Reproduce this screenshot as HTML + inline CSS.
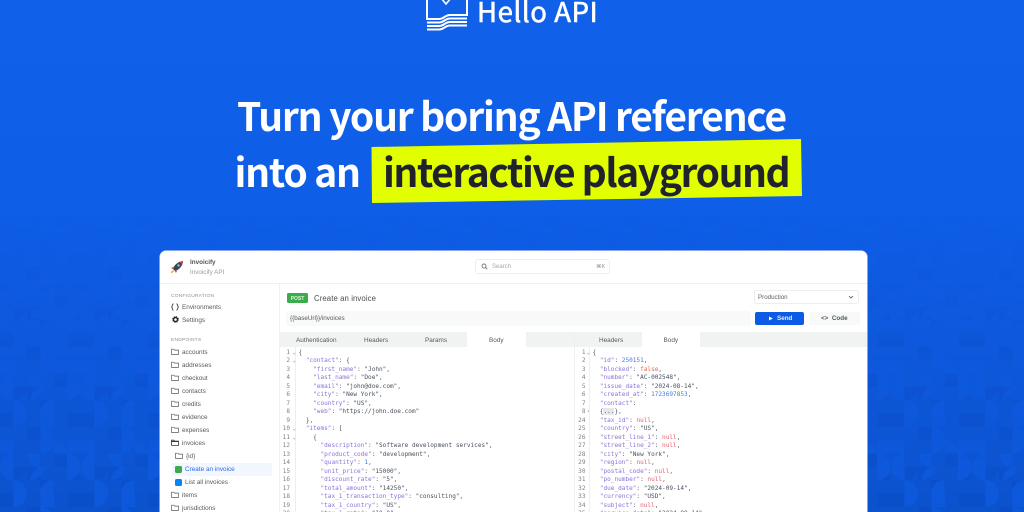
<!DOCTYPE html>
<html><head><meta charset="utf-8">
<style>
*{box-sizing:border-box;margin:0;padding:0}
html,body{width:1024px;height:512px;overflow:hidden}
body{position:relative;background:linear-gradient(180deg,#1060ea 0,#0f5ee8 200px,#0b52cd 512px);font-family:"Liberation Sans",sans-serif}
.a{position:absolute;white-space:nowrap}
.h{font-family:"Noto Sans CJK SC","Liberation Sans",sans-serif;font-weight:700;font-size:39px;letter-spacing:-1.22px;color:#fff;line-height:56px}
#card{position:absolute;left:160px;top:251px;width:707px;height:270px;background:#fff;border-radius:6px;overflow:hidden;box-shadow:0 0 0 .6px #c9d6f5}
#card .a{line-height:11px}
.s{font-size:6.4px;color:#55595e}
.sec{font-size:4.9px;color:#8a8f94;letter-spacing:.2px}
pre{position:absolute;font-family:"DejaVu Sans Mono","Liberation Mono",monospace;font-size:6.08px;line-height:8.5px;color:#4a525e}
.n{color:#7d8288;text-align:right}
i{font-style:normal;color:#8d72d8}
b{font-weight:normal;color:#3f7fd9}
u{text-decoration:none;color:#e8684f}
em{font-style:normal;color:#e4606d}
</style></head><body>
<svg class="a" style="left:0;top:0" width="1024" height="512">
<defs>
<pattern id="p" width="81" height="80" patternUnits="userSpaceOnUse" x="0" y="347">
<g fill="#0a48be" fill-opacity=".35">
<rect x="27" y="0" width="13.5" height="13.3"/><rect x="54" y="27" width="13.5" height="13"/><rect x="40.5" y="53" width="13.5" height="13.5"/>
<rect x="67.5" y="66" width="13.5" height="14"/><rect x="0" y="66" width="13" height="14"/><rect x="27" y="40" width="13.5" height="13"/>
<path d="M13.5 40h13.5a13.5 13.5 0 0 1-13.5 13z"/><path d="M67.5 53h13.5a13.5 13.5 0 0 0-13.5-13z"/>
</g>
<g fill="#0e59de">
<path d="M13.5 26.5a13.5 13.5 0 0 0 0 27z"/>
<path d="M67 26.5a13.5 13.5 0 0 1 0 27z"/>
<path d="M53.5 53a13.5 13.5 0 0 0 0 27z"/>
<path d="M13.5 53a13.5 13.5 0 0 1 0 27z"/>
<path d="M40.5 66.5h13.5v13.5h-13.5z"/>
<path d="M0 13.5h13.5v13h-13.5z"/>
<path d="M54 13.5v13h13.5a13.5 13.5 0 0 0-13.5-13z"/>
<path d="M67.5 13.5h13.5v13h-13.5z"/>
<path d="M40.5 0a13.5 13.5 0 0 1 0 27z"/>
<path d="M27 27h13.5v13.5a13.5 13.5 0 0 1-13.5-13.5z"/>
<path d="M30.5 53c0-8 7-13.5 13.5-13.5c0 8-6 13.5-13.5 13.5z"/>
</g>
</pattern>
<linearGradient id="g" x1="0" y1="0" x2="0" y2="1"><stop offset="0" stop-color="#fff" stop-opacity="0"/><stop offset=".4" stop-color="#fff" stop-opacity=".5"/><stop offset="1" stop-color="#fff" stop-opacity=".85"/></linearGradient>
<mask id="m"><rect x="0" y="215" width="1024" height="297" fill="url(#g)"/></mask>
</defs>
<rect x="0" y="215" width="1024" height="297" fill="url(#p)" mask="url(#m)"/>
</svg>

<!-- logo -->
<svg class="a" style="left:424px;top:0" width="46" height="32" fill="none" stroke="#fff" stroke-width="2">
<path d="M3 -2V19h12c5 0 6-4 11-4h17V-2"/>
<path d="M17 -2l5 6 5-6" stroke-width="1.6"/>
<path d="M3 22.500h12c5 0 6-4 11-4h17"/>
<path d="M3 26h12c5 0 6-4 11-4h17"/>
<path d="M3 29.500h12c5 0 6-4 11-4h17"/>
</svg>
<div class="a" style="left:477px;top:-8px;font-family:'Noto Sans CJK SC',sans-serif;font-weight:400;-webkit-text-stroke:.6px #fff;font-size:27.500px;line-height:36px;color:#fff;letter-spacing:.6px">Hello API</div>

<!-- headline -->
<div class="a h" style="left:237px;top:87px">Turn your boring API reference</div>
<div class="a h" style="left:234.500px;top:143px">into an</div>
<svg class="a" style="left:0;top:0" width="1024" height="260"><polygon points="371.500,147 801,139 802,196 372,203" fill="#e1ff00"/></svg>
<div class="a h" style="left:383px;top:143px;color:#20232b;letter-spacing:-1.45px">interactive playground</div>

<!-- card -->
<div id="card">
<svg class="a" style="left:10px;top:9px" width="14" height="14" viewBox="0 0 14 14">
<path d="M3 9C4 5 8 1.500 13 1c-.3 5-4 9-8 10z" fill="#3d4450"/>
<path d="M9.500 2.500C10.500 2 12 1.300 13 1c0 1.300-.4 2.500-.8 3.500z" fill="#d8383d"/>
<circle cx="8.500" cy="5.500" r="1.200" fill="#8fc4e8"/>
<path d="M3.500 7L1 8l1.800 1zM7 10.500L6 13l-1-1.800z" fill="#d8383d"/>
<path d="M3.200 10.200C2 10.500 1 12 .8 13.200c1.400-.2 2.800-1 3.200-2.200z" fill="#f5a623"/>
</svg>
<div class="a" style="left:30px;top:6px;font-size:6.3px;font-weight:bold;color:#50555a">Invoicify</div>
<div class="a" style="left:30px;top:15.500px;font-size:6.3px;color:#9a9ea3">Invoicify API</div>

<div class="a" style="left:315px;top:8px;width:135px;height:15px;border:.6px solid #eceef0;border-radius:3px"></div>
<svg class="a" style="left:321px;top:12px" width="7" height="7" fill="none" stroke="#777" stroke-width=".9"><circle cx="3" cy="3" r="2"/><path d="M4.500 4.500L6.300 6.300"/></svg>
<div class="a" style="left:332px;top:11px;font-size:6px;color:#a3a7ab">Search</div>
<div class="a" style="left:436px;top:11px;font-size:5.500px;color:#8c9095">⌘K</div>

<div class="a" style="left:0;top:32px;width:707px;height:.7px;background:#eff0f1"></div>
<div class="a" style="left:119px;top:32px;width:.7px;height:240px;background:#eff0f1"></div>

<div class="a sec" style="left:11px;top:39.500px">CONFIGURATION</div>
<svg class="a" style="left:11px;top:52px" width="8" height="8" fill="none" stroke="#333" stroke-width=".8"><path d="M2.500 .8C1 .8 1.500 3.500 .7 4c.8.500.3 3.200 1.800 3.200M5.500 .8C7 .8 6.500 3.500 7.300 4c-.8.500-.3 3.200-1.800 3.200"/></svg>
<div class="a s" style="left:22px;top:50.500px">Environments</div>
<svg class="a" style="left:11.500px;top:65px" width="7" height="7" viewBox="0 0 8 8"><circle cx="4" cy="4" r="2.300" fill="none" stroke="#222" stroke-width="1.600"/><circle cx="4" cy="4" r="3.300" fill="none" stroke="#222" stroke-width="1.100" stroke-dasharray="1.300 1.300"/></svg>
<div class="a s" style="left:22px;top:63.500px">Settings</div>
<div class="a sec" style="left:11px;top:84px">ENDPOINTS</div>

<svg width="0" height="0" style="position:absolute"><defs><path id="f" d="M.5 1.200h2.400l.8.900h3.800v4.300H.5z" fill="none" stroke="#55595e" stroke-width=".7"/></defs></svg>

<svg class="a" style="left:11px;top:97px" width="8" height="8"><use href="#f"/></svg><div class="a s" style="left:22px;top:95.500px">accounts</div>
<svg class="a" style="left:11px;top:110px" width="8" height="8"><use href="#f"/></svg><div class="a s" style="left:22px;top:108.500px">addresses</div>
<svg class="a" style="left:11px;top:123px" width="8" height="8"><use href="#f"/></svg><div class="a s" style="left:22px;top:121.500px">checkout</div>
<svg class="a" style="left:11px;top:136px" width="8" height="8"><use href="#f"/></svg><div class="a s" style="left:22px;top:134.500px">contacts</div>
<svg class="a" style="left:11px;top:149px" width="8" height="8"><use href="#f"/></svg><div class="a s" style="left:22px;top:147.500px">credits</div>
<svg class="a" style="left:11px;top:162px" width="8" height="8"><use href="#f"/></svg><div class="a s" style="left:22px;top:160.500px">evidence</div>
<svg class="a" style="left:11px;top:175px" width="8" height="8"><use href="#f"/></svg><div class="a s" style="left:22px;top:173.500px">expenses</div>
<svg class="a" style="left:11px;top:188px" width="8" height="8"><path d="M.5 1.200h2.400l.8.900h3.800v4.300H.5z" fill="none" stroke="#333" stroke-width=".8"/><path d="M.5 2.500h7" stroke="#333" stroke-width="1"/></svg><div class="a s" style="left:22px;top:186.500px">invoices</div>
<svg class="a" style="left:15px;top:201px" width="8" height="8"><use href="#f"/></svg><div class="a s" style="left:26px;top:199.500px">{id}</div>
<div class="a" style="left:12px;top:212px;width:100px;height:13px;background:#f2f6fe;border-radius:2px"></div>
<div class="a" style="left:15px;top:215px;width:6.500px;height:6.500px;background:#3cab4c;border-radius:1.500px"></div>
<div class="a s" style="left:25px;top:213px;color:#2f6bea">Create an invoice</div>
<div class="a" style="left:15px;top:228px;width:6.500px;height:6.500px;background:#0a84f5;border-radius:1.500px"></div>
<div class="a s" style="left:25px;top:226px">List all invoices</div>
<svg class="a" style="left:11px;top:240px" width="8" height="8"><use href="#f"/></svg><div class="a s" style="left:22px;top:238.500px">items</div>
<svg class="a" style="left:11px;top:253px" width="8" height="8"><use href="#f"/></svg><div class="a s" style="left:22px;top:251.500px">jurisdictions</div>

<!-- toolbar -->
<div class="a" style="left:127px;top:42px;width:21px;height:9.500px;background:#3cab4c;border-radius:1.500px"></div>
<div class="a" style="left:127px;top:42.500px;width:21px;color:#dff3e2;font-size:5px;font-weight:bold;text-align:center">POST</div>
<div class="a" style="left:154px;top:41.500px;font-size:7.800px;color:#4a4e53;letter-spacing:.08px">Create an invoice</div>
<div class="a" style="left:594px;top:39px;width:105px;height:14px;border:.6px solid #eceef0;border-radius:2.500px"></div>
<div class="a s" style="left:598px;top:40.500px;font-size:6.200px;color:#5c6166">Production</div>
<svg class="a" style="left:688px;top:44px" width="6" height="5" fill="none" stroke="#555" stroke-width=".8"><path d="M1 1l2 2 2-2"/></svg>

<div class="a" style="left:126px;top:60px;width:465px;height:15px;background:#f8f9f9;border-radius:3px"></div>
<div class="a s" style="left:130px;top:62px;font-size:6.300px">{{baseUrl}}/invoices</div>
<div class="a" style="left:595px;top:61px;width:49px;height:13px;background:#0d5ae5;border-radius:2px"></div>
<svg class="a" style="left:608px;top:64px" width="6" height="7"><path d="M1 1.500l3.800 2-3.800 2z" fill="#fff"/></svg>
<div class="a" style="left:617px;top:62px;font-size:6.300px;font-weight:bold;color:#e7eefc">Send</div>
<div class="a" style="left:649px;top:61px;width:51px;height:13px;background:#f8f9f9;border-radius:2px"></div>
<div class="a" style="left:661px;top:62px;font-size:6.300px;font-weight:bold;color:#55595e">&lt;&gt;&nbsp; Code</div>

<!-- tabs -->
<div class="a" style="left:120px;top:81px;width:587px;height:15px;background:#f1f3f3"></div>
<div class="a" style="left:307px;top:81px;width:59px;height:15px;background:#fff"></div>
<div class="a" style="left:482px;top:81px;width:58px;height:15px;background:#fff"></div>
<div class="a" style="left:414px;top:81px;width:.7px;height:190px;background:#eceef0"></div>
<div class="a s" style="left:136px;top:83.500px">Authentication</div>
<div class="a s" style="left:204px;top:83.500px">Headers</div>
<div class="a s" style="left:265px;top:83.500px">Params</div>
<div class="a s" style="left:329px;top:83.500px">Body</div>
<div class="a s" style="left:439px;top:83.500px">Headers</div>
<div class="a s" style="left:503.500px;top:83.500px">Body</div>
<div class="a" style="left:135px;top:96px;width:.7px;height:180px;background:#eceef0"></div>
<div class="a" style="left:429px;top:96px;width:.7px;height:180px;background:#eceef0"></div>

<pre class="n" style="left:120px;top:97.500px;width:10px">1
2
3
4
5
6
7
8
9
10
11
12
13
14
15
16
17
18
19
20</pre>
<pre class="n" style="left:131px;top:97.500px;width:5px;color:#999">⌄
⌄







⌄
⌄</pre>
<pre style="left:138.500px;top:97.500px">{
  <i>"contact"</i>: {
    <i>"first_name"</i>: "John",
    <i>"last_name"</i>: "Doe",
    <i>"email"</i>: "john@doe.com",
    <i>"city"</i>: "New York",
    <i>"country"</i>: "US",
    <i>"web"</i>: "https://john.doe.com"
  },
  <i>"items"</i>: [
    {
      <i>"description"</i>: "Software development services",
      <i>"product_code"</i>: "development",
      <i>"quantity"</i>: <b>1</b>,
      <i>"unit_price"</i>: "15000",
      <i>"discount_rate"</i>: "5",
      <i>"total_amount"</i>: "14250",
      <i>"tax_1_transaction_type"</i>: "consulting",
      <i>"tax_1_country"</i>: "US",
      <i>"tax_1_rate"</i>: "10.0"</pre>

<pre class="n" style="left:414px;top:97.500px;width:11.500px">1
2
3
4
5
6
7
8
24
25
26
27
28
29
30
31
32
33
34
35</pre>
<pre class="n" style="left:425px;top:97.500px;width:5px;color:#999">⌄






›</pre>
<pre style="left:432.500px;top:97.500px">{
  <i>"id"</i>: <b>250151</b>,
  <i>"blocked"</i>: <u>false</u>,
  <i>"number"</i>: "AC-002548",
  <i>"issue_date"</i>: "2024-08-14",
  <i>"created_at"</i>: <b>1723697853</b>,
  <i>"contact"</i>:
  {<span style="background:#e6e8ea">...</span>},
  <i>"tax_id"</i>: <em>null</em>,
  <i>"country"</i>: "US",
  <i>"street_line_1"</i>: <em>null</em>,
  <i>"street_line_2"</i>: <em>null</em>,
  <i>"city"</i>: "New York",
  <i>"region"</i>: <em>null</em>,
  <i>"postal_code"</i>: <em>null</em>,
  <i>"po_number"</i>: <em>null</em>,
  <i>"due_date"</i>: "2024-09-14",
  <i>"currency"</i>: "USD",
  <i>"subject"</i>: <em>null</em>,
  <i>"service_date"</i>: "2024-08-14"</pre>
</div>
</body></html>
